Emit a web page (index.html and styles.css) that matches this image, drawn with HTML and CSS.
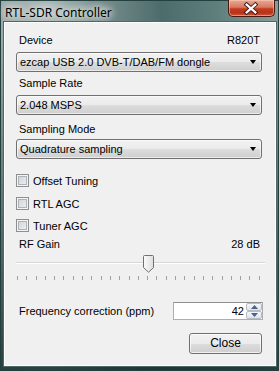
FILE: index.html
```html
<!DOCTYPE html>
<html>
<head>
<meta charset="utf-8">
<link rel="stylesheet" href="styles.css">
</head>
<body>
<div class="window">
  <div class="titlebar">
    <span class="title">RTL-SDR Controller</span>
    <div class="close-x">
      <svg width="47" height="17" viewBox="0 0 47 17">
        <path d="M19 4.5 L28 12.5 M28 4.5 L19 12.5" stroke="#3a1a14" stroke-width="4.2" stroke-linecap="square"/>
        <path d="M19 4.5 L28 12.5 M28 4.5 L19 12.5" stroke="#ffffff" stroke-width="2.2" stroke-linecap="square"/>
      </svg>
    </div>
  </div>
  <div class="client">
    <div class="label-row r-device"><span>Device</span><span>R820T</span></div>
    <div class="combo c1"><span>ezcap USB 2.0 DVB-T/DAB/FM dongle</span><i class="arrow"></i></div>
    <div class="label-row r-rate"><span>Sample Rate</span></div>
    <div class="combo c2"><span>2.048 MSPS</span><i class="arrow"></i></div>
    <div class="label-row r-mode"><span>Sampling Mode</span></div>
    <div class="combo c3"><span>Quadrature sampling</span><i class="arrow"></i></div>
    <div class="check ch1"><i class="box"></i><span>Offset Tuning</span></div>
    <div class="check ch2"><i class="box"></i><span>RTL AGC</span></div>
    <div class="check ch3"><i class="box"></i><span>Tuner AGC</span></div>
    <div class="label-row r-gain"><span>RF Gain</span><span>28 dB</span></div>
    <div class="slider">
      <div class="track"></div>
      <svg class="thumb" width="11" height="18" viewBox="0 0 11 18">
        <defs>
          <linearGradient id="tg" x1="0" y1="0" x2="1" y2="0">
            <stop offset="0" stop-color="#fbfbfb"/>
            <stop offset="1" stop-color="#dedede"/>
          </linearGradient>
        </defs>
        <path d="M0.5 1.5 Q0.5 0.5 1.5 0.5 H9.5 Q10.5 0.5 10.5 1.5 V12.5 L5.5 17.2 L0.5 12.5 Z" fill="url(#tg)" stroke="#707070"/>
      </svg>
      <div class="ticks">
        <i></i><i></i><i></i><i></i><i></i><i></i><i></i><i></i><i></i>
        <i></i><i></i><i></i><i></i><i></i><i></i><i></i><i></i><i></i>
        <i></i><i></i><i></i><i></i><i></i><i></i><i></i><i></i><i></i>
      </div>
    </div>
    <div class="freq-row">
      <span class="freq-label">Frequency correction (ppm)</span>
      <div class="spin">
        <span class="spin-val">42</span>
        <div class="spin-btns">
          <div class="sb"><svg width="7" height="4" viewBox="0 0 7 4"><path d="M0 4 L3.5 0 L7 4 Z" fill="#4d6185"/></svg></div>
          <div class="sb"><svg width="7" height="4" viewBox="0 0 7 4"><path d="M0 0 L3.5 4 L7 0 Z" fill="#4d6185"/></svg></div>
        </div>
      </div>
    </div>
    <div class="btn-row"><div class="button">Close</div></div>
  </div>
</div>
</body>
</html>
```

FILE: styles.css
```css
html, body {
  margin: 0;
  padding: 0;
}
body {
  width: 279px;
  height: 371px;
  overflow: hidden;
  font-family: "Liberation Sans", Arial, sans-serif;
  font-size: 11px;
  color: #000;
}
.window {
  width: 279px;
  height: 371px;
  box-sizing: border-box;
  background:
    linear-gradient(to bottom, rgba(0,0,0,0) 0px, rgba(0,0,0,0) 40px, rgba(20,45,44,0.85) 371px),
    linear-gradient(to right, #9aa8a7 0%, #a9b6b5 18%, #6f8886 40%, #4c6c6b 58%, #5f7f7d 78%, #8a9d9b 100%);
  display: flex;
  flex-direction: column;
  padding: 0 3px 5px 4px;
  box-shadow: inset 0 0 0 1px #23403f;
}
.titlebar {
  height: 22px;
  display: flex;
  align-items: flex-start;
  flex: none;
}
.title {
  font-family: "Noto Sans", "Open Sans", sans-serif;
  font-size: 12px;
  line-height: 16px;
  margin-top: 5px;
  margin-left: 1px;
  color: #000;
  text-shadow: 0 0 6px #e8eeee, 0 0 8px #e8eeee, 0 0 10px #dfe7e6;
}
.close-x {
  margin-left: auto;
  margin-right: 1px;
  width: 47px;
  height: 17px;
  box-sizing: border-box;
  border: 1px solid #4a1a12;
  border-top: none;
  border-radius: 0 0 5px 5px;
  background: linear-gradient(to bottom, #e8a896 0%, #d77a62 45%, #c43c1e 55%, #b8321a 80%, #d0583a 100%);
  box-shadow: inset 0 0 0 1px rgba(255,210,190,0.5);
  display: flex;
}
.close-x svg { display: block; margin-left: -1px; }
.client {
  flex: 1;
  background: #f0f0f0;
  border: 1px solid #ffffff;
  outline: 1px solid #4f6866;
  padding: 0 13px 0 11px;
  display: flex;
  flex-direction: column;
}
.label-row {
  display: flex;
  justify-content: space-between;
  height: 14px;
  line-height: 14px;
  padding: 0 2px 0 3px;
}
.r-device { margin-top: 10px; }
.r-rate { margin-top: 4px; }
.r-mode { margin-top: 7px; }
.r-gain { margin-top: 4px; }
.combo {
  height: 20px;
  box-sizing: border-box;
  border: 1px solid #707070;
  border-radius: 3px;
  background: linear-gradient(to bottom, #f2f2f2 0%, #ebebeb 50%, #dddddd 51%, #cfcfcf 100%);
  box-shadow: inset 0 0 0 1px rgba(255,255,255,0.6);
  display: flex;
  align-items: center;
  padding: 0 5px 0 3px;
}
.combo span { flex: 1; line-height: 14px; }
.c1 { margin-top: 5px; }
.c2 { margin-top: 5px; }
.c3 { margin-top: 3px; }
.arrow {
  width: 0;
  height: 0;
  border-left: 3.5px solid transparent;
  border-right: 3.5px solid transparent;
  border-top: 4px solid #000;
  margin-right: 0px;
}
.check {
  height: 15px;
  display: flex;
  align-items: center;
  padding-left: 0;
}
.ch1 { margin-top: 14px; }
.ch2 { margin-top: 8px; }
.ch3 { margin-top: 7px; }
.box {
  width: 13px;
  height: 13px;
  box-sizing: border-box;
  border: 1px solid #8e8f8f;
  background: linear-gradient(135deg, #cbcfd5 0%, #dfe1e4 50%, #f4f4f4 100%);
  box-shadow: inset 0 0 0 1px #f4f4f4, inset 0 0 0 2px #aeb3b9;
  margin-right: 4px;
  flex: none;
}
.check span { line-height: 14px; }
.slider {
  position: relative;
  margin-top: 1px;
  height: 30px;
}
.track {
  position: absolute;
  left: 0;
  right: -3px;
  top: 10px;
  height: 2px;
  background: #b9b9b9;
  border-bottom: 1px solid #ffffff;
  border-top: 1px solid #d6d6d6;
  box-sizing: border-box;
}
.thumb {
  position: absolute;
  left: 127px;
  top: 3px;
}
.ticks {
  position: absolute;
  left: 1px;
  right: 2px;
  top: 24px;
  height: 4px;
  display: flex;
  justify-content: space-between;
}
.ticks i {
  width: 1px;
  height: 4px;
  background: #a0a0a0;
}
.freq-row {
  margin-top: 20px;
  height: 18px;
  display: flex;
  align-items: center;
}
.freq-label {
  flex: 1;
  padding-left: 3px;
  line-height: 14px;
}
.spin {
  width: 90px;
  height: 18px;
  box-sizing: border-box;
  border: 1px solid #abadb3;
  border-top-color: #8e8f8f;
  background: #fff;
  display: flex;
  align-items: stretch;
  margin-right: -1px;
}
.spin-val {
  flex: 1;
  text-align: right;
  line-height: 16px;
  padding-right: 2px;
}
.spin-btns {
  width: 16px;
  display: flex;
  flex-direction: column;
  gap: 0;
}
.sb {
  flex: 1;
  box-sizing: border-box;
  border: 1px solid #b6bcc6;
  border-radius: 2px;
  background: linear-gradient(to bottom, #f4f6f9, #dfe4ea);
  display: flex;
  align-items: center;
  justify-content: center;
}
.sb svg { display: block; }
.btn-row {
  margin-top: 13px;
  display: flex;
  justify-content: flex-end;
}
.button {
  width: 73px;
  height: 21px;
  box-sizing: border-box;
  border: 1px solid #707070;
  border-radius: 3px;
  background: linear-gradient(to bottom, #f2f2f2 0%, #ebebeb 50%, #dddddd 51%, #cfcfcf 100%);
  box-shadow: inset 0 0 0 1px rgba(255,255,255,0.7);
  text-align: center;
  line-height: 19px;
  font-size: 12px;
  margin-right: 0px;
}
```
